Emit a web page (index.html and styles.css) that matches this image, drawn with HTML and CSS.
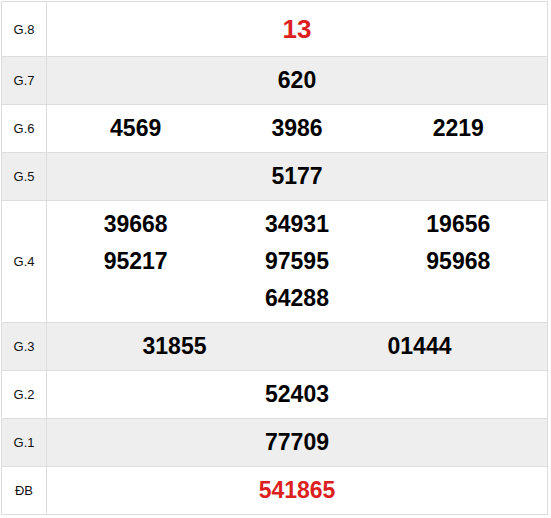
FILE: index.html
```html
<!DOCTYPE html>
<html>
<head>
<meta charset="utf-8">
<link rel="stylesheet" href="styles.css">
</head>
<body>
<div class="board">
  <div class="row row-g8">
    <div class="label">G.8</div>
    <div class="nums cols-1"><span class="num red big">13</span></div>
  </div>
  <div class="row alt">
    <div class="label">G.7</div>
    <div class="nums cols-1"><span class="num">620</span></div>
  </div>
  <div class="row">
    <div class="label">G.6</div>
    <div class="nums cols-3"><span class="num">4569</span><span class="num">3986</span><span class="num">2219</span></div>
  </div>
  <div class="row alt">
    <div class="label">G.5</div>
    <div class="nums cols-1"><span class="num">5177</span></div>
  </div>
  <div class="row">
    <div class="label">G.4</div>
    <div class="nums cols-3"><span class="num">39668</span><span class="num">34931</span><span class="num">19656</span><span class="num">95217</span><span class="num">97595</span><span class="num">95968</span><span class="num"></span><span class="num">64288</span><span class="num"></span></div>
  </div>
  <div class="row alt">
    <div class="label">G.3</div>
    <div class="nums cols-2"><span class="num">31855</span><span class="num">01444</span></div>
  </div>
  <div class="row">
    <div class="label">G.2</div>
    <div class="nums cols-1"><span class="num">52403</span></div>
  </div>
  <div class="row alt">
    <div class="label">G.1</div>
    <div class="nums cols-1"><span class="num">77709</span></div>
  </div>
  <div class="row">
    <div class="label">ĐB</div>
    <div class="nums cols-1"><span class="num red">541865</span></div>
  </div>
</div>
</body>
</html>
```
FILE: styles.css
```css
html, body {
  margin: 0;
  padding: 0;
  background: #fff;
}
body {
  font-family: "Liberation Sans", Arial, sans-serif;
  color: #000;
}
.board {
  margin: 1px 0 0 1px;
  width: 547px;
  box-sizing: border-box;
  border-top: 1px solid #ddd;
  border-left: 1px solid #ddd;
}
.row {
  display: grid;
  grid-template-columns: 45px 501px;
}
.row.alt {
  background: #eee;
}
.label {
  box-sizing: border-box;
  border-right: 1px solid #ddd;
  border-bottom: 1px solid #ddd;
  display: flex;
  align-items: center;
  justify-content: center;
  font-size: 13px;
  color: #111;
}
.nums {
  box-sizing: border-box;
  border-right: 1px solid #ddd;
  border-bottom: 1px solid #ddd;
  display: grid;
  padding: 5px 0;
}
.cols-1 { grid-template-columns: 1fr; }
.cols-2 { grid-template-columns: 1fr 1fr; padding-left: 5px; padding-right: 5px; }
.cols-3 { grid-template-columns: 1fr 1fr 1fr; padding-left: 8px; padding-right: 8px; }
.num {
  height: 37px;
  line-height: 37px;
  text-align: center;
  font-size: 23px;
  font-weight: bold;
}
.row-g8 .nums {
  padding: 5px 0 4px;
}
.num.big {
  height: 45px;
  line-height: 45px;
  font-size: 26px;
}
.num.red {
  color: #dc1f1f;
}
```
